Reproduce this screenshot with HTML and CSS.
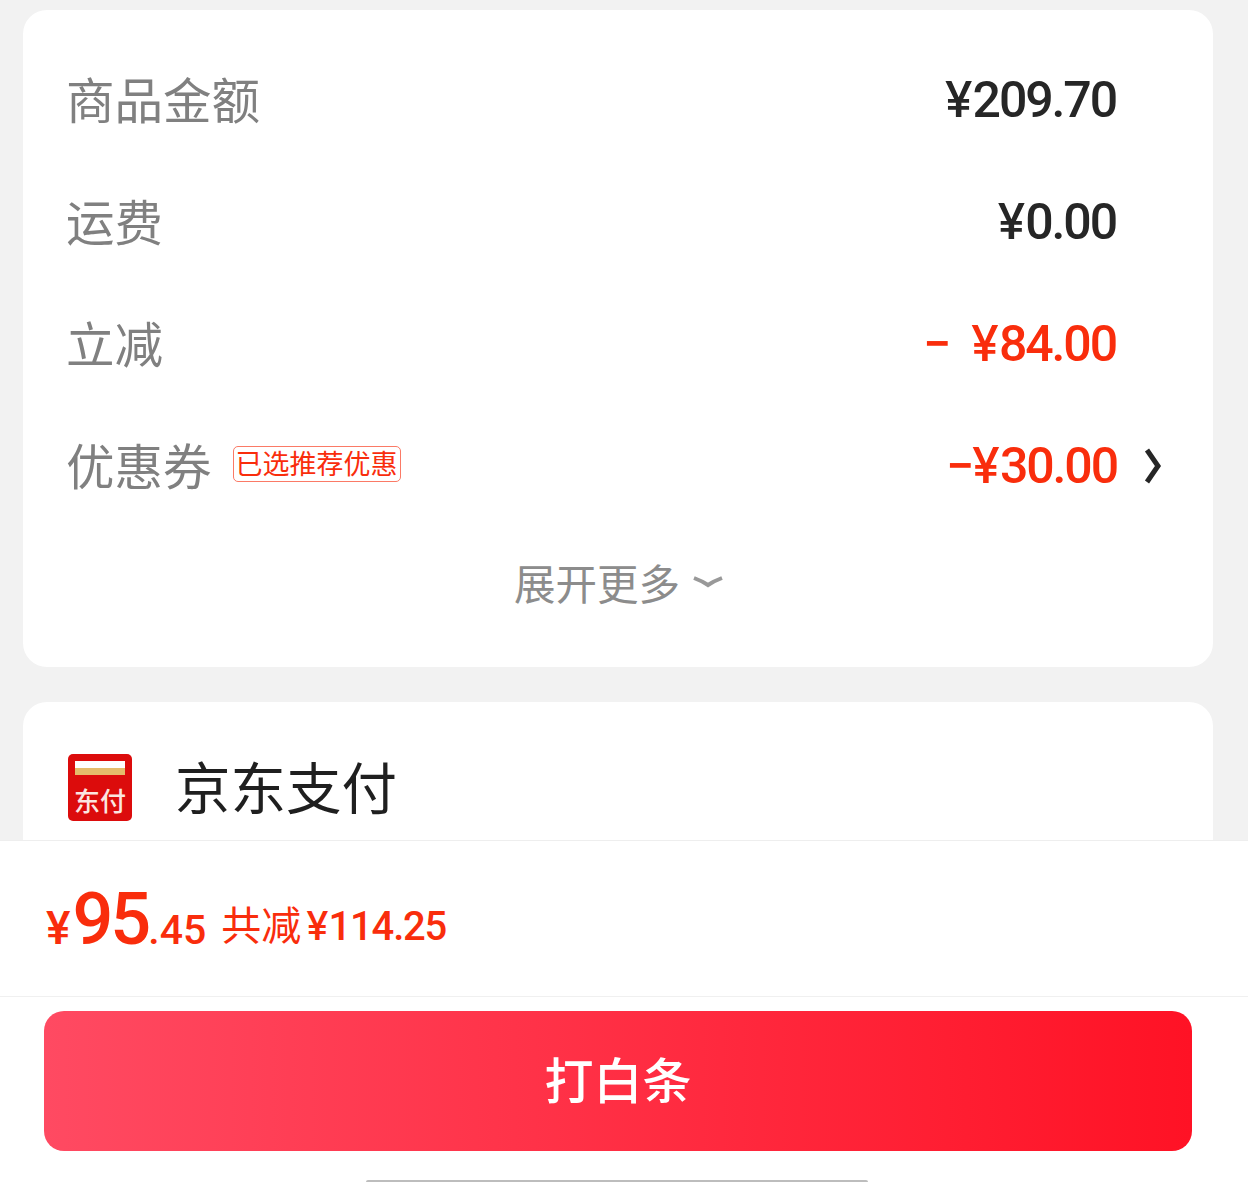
FILE: index.html
```html
<!DOCTYPE html>
<html lang="zh-CN">
<head>
<meta charset="utf-8">
<title>京东支付</title>
<link rel="stylesheet" href="styles.css">
</head>
<body>
<div class="page">
  <main class="content">
    <section class="card summary">
      <div class="row">
        <span class="label">商品金额</span>
        <span class="amount"><span class="yen">¥</span>209.70</span>
      </div>
      <div class="row">
        <span class="label">运费</span>
        <span class="amount"><span class="yen">¥</span>0.00</span>
      </div>
      <div class="row">
        <span class="label">立减</span>
        <span class="amount red"><span class="minus-gap">−</span><span class="yen">¥</span>84.00</span>
      </div>
      <div class="row">
        <span class="label">优惠券</span>
        <span class="tag">已选推荐优惠</span>
        <span class="amount red">−<span class="yen">¥</span>30.00</span>
        <svg class="chevron" width="18" height="36" viewBox="0 0 18 36"><path d="M3 2 L14 18 L3 34" fill="none" stroke="#262626" stroke-width="5"/></svg>
      </div>
      <div class="more">
        <span>展开更多</span>
        <svg class="more-icon" width="30" height="14" viewBox="0 0 30 14"><path d="M1 3 Q9 6 15 10 Q21 6 29 3" fill="none" stroke="#999" stroke-width="4"/></svg>
      </div>
    </section>
    <section class="card pay">
      <svg class="pay-logo" width="64" height="67" viewBox="0 0 64 67">
        <rect width="64" height="67" rx="5" fill="#dc0c0c"/>
        <rect x="7" y="7" width="50" height="14" fill="#fff"/>
        <rect x="7" y="14" width="50" height="7" fill="#e5bc6c"/>
        <text x="32" y="57" text-anchor="middle" class="pay-logo-text">东付</text>
      </svg>
      <span class="pay-name">京东支付</span>
    </section>
  </main>
  <footer class="footer">
    <div class="price-bar">
      <span class="price"><span class="cur">¥</span><span class="int">95</span><span class="dec">.45</span></span>
      <span class="saved"><span class="saved-cn">共减</span><span class="yen">¥</span>114.25</span>
    </div>
    <div class="action">
      <button class="pay-btn" type="button"><span class="pay-btn-label">打白条</span></button>
    </div>
    <div class="home-bar"></div>
  </footer>
</div>
</body>
</html>
```
FILE: styles.css
```css
* { box-sizing: border-box; }
html, body { margin: 0; padding: 0; }
body {
  background: #f2f2f2;
  font-family: "Noto Sans CJK SC", "Noto Sans", sans-serif;
}
.page {
  width: 1248px;
  height: 1182px;
  display: flex;
  flex-direction: column;
  overflow: hidden;
}
.content {
  height: 840px;
  padding: 10px 35px 0 23px;
  display: flex;
  flex-direction: column;
  gap: 35px;
  overflow: hidden;
  flex: none;
}
.card {
  background: #fff;
  border-radius: 24px;
  flex: none;
}
.summary {
  height: 657px;
  padding: 30px 50px 0 43px;
}
.row {
  height: 122px;
  display: flex;
  align-items: center;
}
.label {
  font-size: 48.5px;
  color: #808080;
  line-height: 1;
  padding-bottom: 5px;
}
.amount {
  margin-left: auto;
  margin-right: 47px;
  padding-bottom: 3px;
  font-family: Roboto, sans-serif;
  font-size: 50px;
  font-weight: 500;
  letter-spacing: -2.1px;
  color: #262626;
  line-height: 1;
}
.amount.red { color: #f92d0c; }
.yen {
  font-family: Inter, Roboto, sans-serif;
  letter-spacing: 0;
}
.minus-gap { margin-right: 22px; }
.row .chevron {
  flex: none;
  margin-left: -20px;
  margin-right: 1px;
  margin-bottom: 3px;
  display: block;
}
.tag {
  margin-left: 21px;
  margin-bottom: 6px;
  width: 168px;
  height: 36px;
  border: 1px solid #fb7a66;
  border-radius: 5px;
  color: #f92d0c;
  font-size: 27px;
  line-height: 32px;
  text-align: center;
  white-space: nowrap;
}
.more {
  height: 113px;
  margin-top: -3px;
  padding-left: 8px;
  display: flex;
  align-items: center;
  justify-content: center;
  gap: 13px;
  color: #8c8c8c;
  font-size: 41.5px;
}
.pay {
  height: 180px;
  padding: 52px 44px 0 45px;
  display: flex;
  align-items: flex-start;
  gap: 43px;
}
.pay-logo { display: block; flex: none; }
.pay-logo-text {
  font-family: "Noto Sans CJK SC", sans-serif;
  font-size: 26px;
  font-weight: 500;
  fill: #fbe6e0;
}
.pay-name {
  font-size: 55.5px;
  line-height: 62px;
  color: #1f1f1f;
}
.footer {
  flex: 1;
  background: #fff;
  border-top: 1px solid #eeeeee;
  display: flex;
  flex-direction: column;
}
.price-bar {
  height: 156px;
  padding: 0 0 0 46px;
  border-bottom: 1px solid #f0f0f0;
  display: flex;
  align-items: flex-end;
  color: #f92d0c;
  font-family: Roboto, sans-serif;
  font-weight: 500;
  line-height: 1;
}
.price {
  display: inline-flex;
  align-items: baseline;
  margin-bottom: 40px;
}
.cur { font-size: 46px; margin-right: 2px; }
.int { font-size: 72px; letter-spacing: -3px; }
.dec { font-size: 41px; }
.saved {
  margin-left: 15px;
  margin-bottom: 49px;
  font-size: 40px;
  letter-spacing: -1.2px;
}
.saved-cn {
  font-family: "Noto Sans CJK SC", sans-serif;
  font-weight: 400;
  letter-spacing: 0;
  margin-right: 5px;
}
.action {
  padding: 14px 56px 0 44px;
}
.pay-btn {
  display: block;
  width: 100%;
  height: 140px;
  border: 0;
  border-radius: 20px;
  background: linear-gradient(90deg, #ff4a62 0%, #ff1225 100%);
  color: #fff;
  font-family: "Noto Sans CJK SC", sans-serif;
  font-size: 49px;
  font-weight: 500;
  padding: 0 0 7px;
}
.home-bar {
  width: 502px;
  height: 2px;
  margin: 29px 0 0 366px;
  background: #bdbdbd;
  border-radius: 2px 2px 0 0;
}
```
